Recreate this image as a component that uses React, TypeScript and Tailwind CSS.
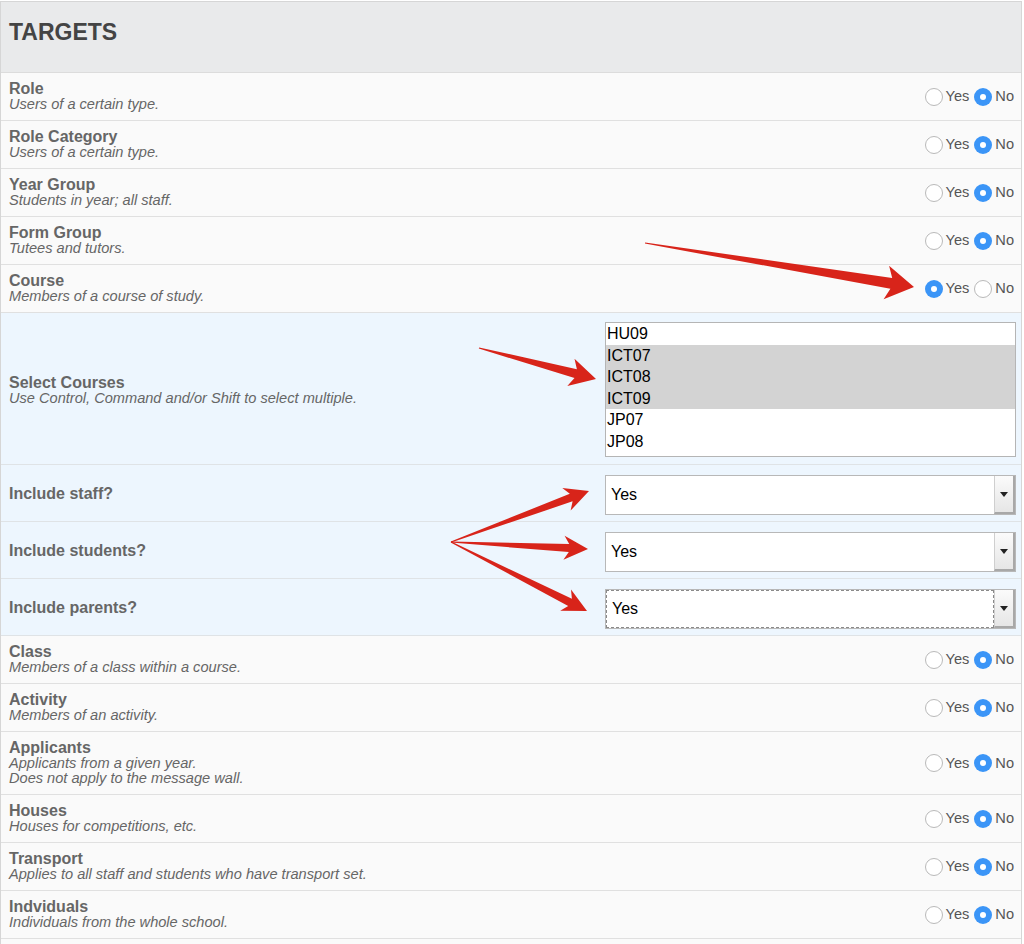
import React from "react";

type Row =
  | { kind: "radio"; title: string; desc: string[]; yes?: boolean }
  | { kind: "list" }
  | { kind: "select"; title: string; focus?: boolean };

const rows: Row[] = [
  { kind: "radio", title: "Role", desc: ["Users of a certain type."] },
  { kind: "radio", title: "Role Category", desc: ["Users of a certain type."] },
  { kind: "radio", title: "Year Group", desc: ["Students in year; all staff."] },
  { kind: "radio", title: "Form Group", desc: ["Tutees and tutors."] },
  { kind: "radio", title: "Course", desc: ["Members of a course of study."], yes: true },
  { kind: "list" },
  { kind: "select", title: "Include staff?" },
  { kind: "select", title: "Include students?" },
  { kind: "select", title: "Include parents?", focus: true },
  { kind: "radio", title: "Class", desc: ["Members of a class within a course."] },
  { kind: "radio", title: "Activity", desc: ["Members of an activity."] },
  {
    kind: "radio",
    title: "Applicants",
    desc: ["Applicants from a given year.", "Does not apply to the message wall."],
  },
  { kind: "radio", title: "Houses", desc: ["Houses for competitions, etc."] },
  { kind: "radio", title: "Transport", desc: ["Applies to all staff and students who have transport set."] },
  { kind: "radio", title: "Indviduals", desc: ["Individuals from the whole school."] },
  { kind: "radio", title: "", desc: [""] },
];

function Radio({ on }: { on: boolean }) {
  return on ? (
    <span className="w-[18px] h-[18px] rounded-full bg-[#3b95f7] flex items-center justify-center">
      <span className="w-[6px] h-[6px] rounded-full bg-white" />
    </span>
  ) : (
    <span className="w-[18px] h-[18px] rounded-full bg-white border border-[#b9b9b9]" />
  );
}

function YesNo({ yes }: { yes: boolean }) {
  return (
    <div className="flex items-center text-[14.6px] text-[#555]">
      <Radio on={yes} />
      <span className="ml-[3px] mr-[5px]">Yes</span>
      <Radio on={!yes} />
      <span className="ml-[3px]">No</span>
    </div>
  );
}

function Title({ children }: { children: React.ReactNode }) {
  return <div className="text-[16px] leading-[17px] font-bold text-[#666]">{children}</div>;
}

function Desc({ children }: { children: React.ReactNode }) {
  return <div className="text-[14.6px] leading-[15px] italic text-[#666]">{children}</div>;
}

function arrow(x1: number, y1: number, x2: number, y2: number, hl: number, hw: number, sw: number) {
  const dx = x2 - x1;
  const dy = y2 - y1;
  const len = Math.hypot(dx, dy);
  const ux = dx / len;
  const uy = dy / len;
  const px = -uy;
  const py = ux;
  const bx = x2 - ux * hl;
  const by = y2 - uy * hl;
  const wx = x2 - ux * (hl + 5);
  const wy = y2 - uy * (hl + 5);
  const pts = [
    [x1 + px * 0.6, y1 + py * 0.6],
    [bx + px * sw, by + py * sw],
    [wx + px * hw, wy + py * hw],
    [x2, y2],
    [wx - px * hw, wy - py * hw],
    [bx - px * sw, by - py * sw],
    [x1 - px * 0.6, y1 - py * 0.6],
  ];
  return pts.map((p) => p[0].toFixed(1) + "," + p[1].toFixed(1)).join(" ");
}

const courses = [
  { c: "HU09", s: false },
  { c: "ICT07", s: true },
  { c: "ICT08", s: true },
  { c: "ICT09", s: true },
  { c: "JP07", s: false },
  { c: "JP08", s: false },
];

export default function App() {
  return (
    <div
      className="relative w-[1024px] h-[944px] overflow-hidden bg-white"
      style={{ fontFamily: '"Liberation Sans", Arial, Helvetica, sans-serif' }}
    >
      <div className="w-[1022px] mt-[1px] border-t border-l border-r border-[#d6d6d6]">
        <div className="h-[71px] bg-[#e9eaeb] border-b border-[#dcdcdc] flex items-center px-[8px] pt-[1px]">
          <h1 className="text-[23px] font-bold text-[#444] leading-none -mt-[10px]">TARGETS</h1>
        </div>
        {rows.map((r, i) => {
          if (r.kind === "radio") {
            const h = r.desc.length > 1 ? "h-[63px]" : "h-[48px]";
            return (
              <div
                key={i}
                className={`${h} bg-[#fafafa] border-b border-[#e0e0e0] flex justify-between pl-[8px] pr-[7px]`}
              >
                <div className="pt-[7px]">
                  <Title>{r.title}</Title>
                  {r.desc.map((d, j) => (
                    <Desc key={j}>{d}</Desc>
                  ))}
                </div>
                {r.title && (
                  <div className="flex items-center pt-[1px]">
                    <YesNo yes={!!r.yes} />
                  </div>
                )}
              </div>
            );
          }
          if (r.kind === "list") {
            return (
              <div
                key={i}
                className="h-[152px] bg-[#edf6fe] border-b border-[#dfe3e6] flex justify-between items-start pl-[8px] pr-[5px]"
              >
                <div className="self-center pt-[2px]">
                  <Title>Select Courses</Title>
                  <Desc>Use Control, Command and/or Shift to select multiple.</Desc>
                </div>
                <div className="mt-[9px] w-[411px] h-[135px] bg-white border border-[#b5b5b5] overflow-hidden">
                  {courses.map((c) => (
                    <div
                      key={c.c}
                      className={`h-[21.5px] leading-[21.5px] text-[16px] text-black pl-[1px] ${
                        c.s ? "bg-[#d3d3d3]" : "bg-white"
                      }`}
                    >
                      {c.c}
                    </div>
                  ))}
                </div>
              </div>
            );
          }
          return (
            <div
              key={i}
              className="h-[57px] bg-[#edf6fe] border-b border-[#dfe3e6] flex justify-between items-start pl-[8px] pr-[5px]"
            >
              <div className="self-center">
                <Title>{r.title}</Title>
              </div>
              <div className="mt-[10px] w-[411px] h-[40px] bg-white border border-[#b8b8b8] flex items-stretch">
                <div
                  className={`flex-1 flex items-center pl-[5px] text-[16px] text-black ${
                    r.focus ? "border border-dashed border-[#8a8a8a]" : ""
                  }`}
                >
                  Yes
                </div>
                <div className="w-[21px] bg-gradient-to-b from-[#fbfbfb] to-[#e6e6e6] border-l border-[#cfcfcf] border-r-2 border-b-2 border-r-[#a8a8a8] border-b-[#a8a8a8] flex items-center justify-center">
                  <svg width="8" height="5" viewBox="0 0 8 5">
                    <polygon points="0,0 8,0 4,5" fill="#222" />
                  </svg>
                </div>
              </div>
            </div>
          );
        })}
      </div>

      <svg className="absolute inset-0 pointer-events-none" width="1024" height="944">
        <g fill="#d8241a">
          <polygon points={arrow(645, 243, 914, 287, 23, 17, 5.5)} />
          <polygon points={arrow(479, 348, 596, 379, 21, 14, 4.5)} />
          <polygon points={arrow(451, 542, 589, 491, 19, 12, 4)} />
          <polygon points={arrow(451, 542, 588, 549, 19, 12, 4)} />
          <polygon points={arrow(451, 542, 587, 611, 19, 12, 4)} />
        </g>
      </svg>
    </div>
  );
}
